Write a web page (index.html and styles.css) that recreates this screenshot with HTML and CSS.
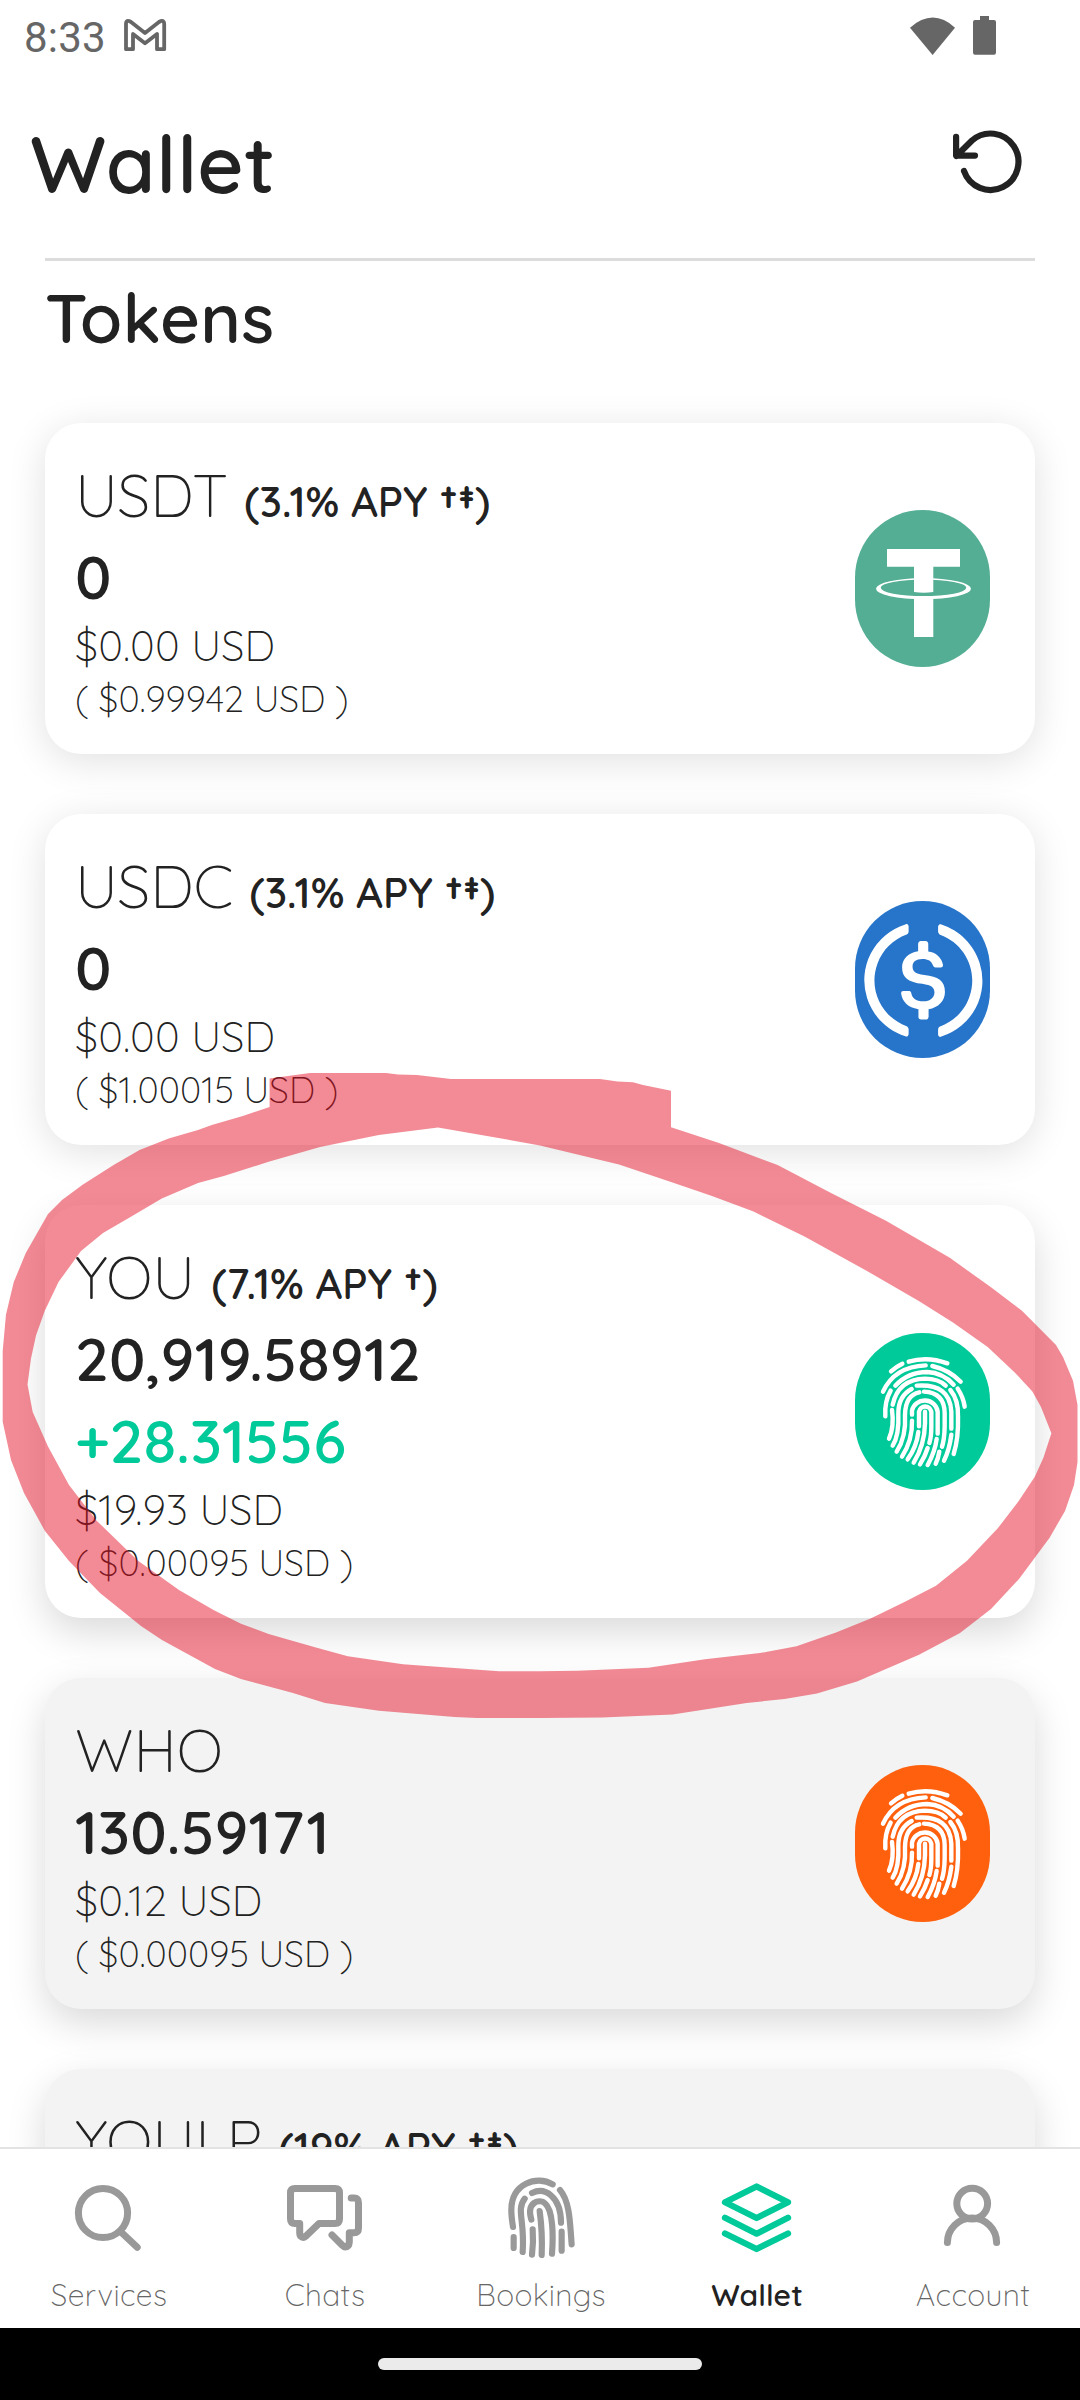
FILE: index.html
```html
<!DOCTYPE html>
<html lang="en">
<head>
<meta charset="utf-8">
<title>Wallet</title>
<link rel="stylesheet" href="styles.css">
</head>
<body>
<svg class="defs" aria-hidden="true">
  <symbol id="fingerprint" viewBox="45 69 405 471">
    <g fill="none" stroke="#fff" stroke-width="13.200" stroke-linecap="round">
      <path d="M206 155Q262 138 322 160M153 184Q170 169 187 161M129 245Q163 170 257 166M277 168Q328 180 362 215M166 227Q205 186 262 186Q308 188 341 224"/>
      <path d="M158 284Q175 208 255 206Q295 206 317 227M152 242Q133 275 136 319M353 236Q370 262 374 290"/>
      <path d="M156 300Q163 350 147 386M158 407Q178 375 175 310Q175 258 215 237M170 425Q199 380 195 315Q196 255 238 247"/>
      <path d="M252 245Q314 248 314 310V350Q313 390 306 410M230 227Q330 220 334 305V356M334 374Q328 420 312 452M331 240Q356 270 354 320Q356 385 341 432"/>
      <path d="M216 314V302A39 38 0 0 1 293 305V371M216 332Q218 390 186 440M237 349V305A19 20 0 0 1 274 305V350Q274 380 268 399"/>
      <path d="M255 305V340Q254 405 221 458M235 366Q230 410 203 448M263 414Q255 440 240 463M290 387Q285 425 263 465M298 425Q295 445 287 461"/>
    </g>
  </symbol>
</svg>

<div class="phone">
  <div class="status">
    <span class="time">8:33</span>
    <svg class="gmail" viewBox="0 0 50 42"><path d="M6 9V34.2H13V19L25 28.2L37 19V34.2H44.2V9Q44 4 39 7L25 18L11 7Q6 4 6 9Z" fill="none" stroke="#666" stroke-width="3.8" stroke-linejoin="round"/></svg>
    <svg class="wifi" viewBox="0 0 46 40"><path d="M0 10.7Q23 -9.5 45 10.7L22.6 38Z" fill="#666"/></svg>
    <svg class="battery" viewBox="0 0 24 40"><path d="M7 0H16V4H21Q23 4 23 6V36.500Q23 38.700 21 38.700H2Q0 38.700 0 36.500V6Q0 4 2 4H7Z" fill="#666"/></svg>
  </div>

  <header class="header">
    <h1>Wallet</h1>
    <svg class="refresh" viewBox="0 0 85 84" fill="none" stroke="#222" stroke-width="6.2" stroke-linecap="round" stroke-linejoin="round"><path d="M19 51A28 28.200 0 1 0 27 20.500L11.300 36M11.100 16.800V35.600H30"/></svg>
  </header>

  <main class="content">
    <h2>Tokens</h2>

    <section class="card">
      <div class="info">
        <div class="name">USDT <b>(3.1% APY †‡)</b></div>
        <div class="amount">0</div>
        <div class="value">$0.00 USD</div>
        <div class="rate">( $0.99942 USD )</div>
      </div>
      <svg class="token tether" viewBox="0 0 135 157" fill="#fff">
        <path d="M32 39H105V56.700H78.300V82Q69 83.500 59 82V56.700H32ZM59 88.500Q69 89.500 78.300 88.500V127H59Z"/>
        <path fill-rule="evenodd" d="M21 78.700A47.500 10.600 0 0 1 116 78.700A47.500 10.600 0 0 1 21 78.700ZM25.700 77.800A42.800 8.300 0 0 0 111.300 77.800A42.800 8.300 0 0 0 25.700 77.800Z"/>
      </svg>
    </section>

    <section class="card">
      <div class="info">
        <div class="name">USDC <b>(3.1% APY †‡)</b></div>
        <div class="amount">0</div>
        <div class="value">$0.00 USD</div>
        <div class="rate">( $1.00015 USD )</div>
      </div>
      <svg class="token usdc" viewBox="0 0 135 157" fill="#fff">
        <g transform="translate(69 79.500) scale(5.370) translate(-16.120 -16)">
          <path d="M20.022 18.124c0-2.124-1.280-2.852-3.840-3.156-1.828-.243-2.193-.728-2.193-1.578 0-.85.61-1.396 1.828-1.396 1.097 0 1.707.364 2.011 1.275a.458.458 0 00.427.303h.975a.416.416 0 00.427-.425v-.06a3.040 3.040 0 00-2.743-2.489V9.142c0-.243-.183-.425-.487-.486h-.915c-.243 0-.426.182-.487.486v1.396c-1.829.242-2.986 1.456-2.986 2.974 0 2.002 1.218 2.791 3.778 3.095 1.707.303 2.255.668 2.255 1.639 0 .97-.853 1.638-2.011 1.638-1.585 0-2.133-.667-2.316-1.578-.06-.242-.244-.364-.427-.364h-1.036a.416.416 0 00-.426.425v.06c.243 1.518 1.219 2.610 3.230 2.914v1.457c0 .242.183.425.487.485h.915c.243 0 .426-.182.487-.485V21.340c1.829-.303 3.047-1.578 3.047-3.216z"/>
          <path d="M12.892 24.497c-4.754-1.700-7.192-6.980-5.424-11.653.914-2.550 2.925-4.491 5.424-5.402.244-.121.365-.303.365-.607v-.85c0-.242-.121-.424-.365-.485-.061 0-.183 0-.244.06a10.895 10.895 0 00-7.130 13.717c1.096 3.400 3.717 6.010 7.130 7.102.244.121.488 0 .548-.243.061-.06.061-.122.061-.243v-.85c0-.182-.182-.424-.365-.546zm6.460-18.936c-.244-.122-.488 0-.548.242-.061.061-.061.122-.061.243v.85c0 .243.182.485.365.607 4.754 1.700 7.192 6.980 5.424 11.653-.914 2.550-2.925 4.491-5.424 5.402-.244.121-.365.303-.365.607v.85c0 .242.121.424.365.485.061 0 .183 0 .244-.06a10.895 10.895 0 007.130-13.717c-1.096-3.460-3.778-6.070-7.130-7.162z"/>
        </g>
      </svg>
    </section>

    <section class="card lift">
      <div class="info">
        <div class="name">YOU <b>(7.1% APY †)</b></div>
        <div class="amount">20,919.58912</div>
        <div class="amount gain">+28.31556</div>
        <div class="value">$19.93 USD</div>
        <div class="rate">( $0.00095 USD )</div>
      </div>
      <svg class="token you"><use href="#fingerprint"/></svg>
    </section>

    <section class="card lift muted">
      <div class="info">
        <div class="name">WHO</div>
        <div class="amount">130.59171</div>
        <div class="value">$0.12 USD</div>
        <div class="rate">( $0.00095 USD )</div>
      </div>
      <svg class="token who"><use href="#fingerprint"/></svg>
    </section>

    <section class="card lift muted">
      <div class="info">
        <div class="name">YOULP <b>(19% APY †‡)</b></div>
      </div>
    </section>
  </main>

  <nav class="tabs">
    <div class="tab">
      <svg viewBox="0 0 90 100"><circle cx="40" cy="43" r="24.600"/><path d="M58 62L74.200 77.300"/></svg>
      <span>Services</span>
    </div>
    <div class="tab">
      <svg viewBox="0 0 90 100"><path d="M16 18.500H56Q60.500 18.500 60.500 23V49Q60.500 53.400 56 53.400H40L27 66Q24 68.500 21.500 66Q20.700 65 20.700 63V53.400H16Q11.500 53.400 11.500 49V23Q11.500 18.500 16 18.500ZM72.200 28H75Q79.500 28 79.500 33V58Q79.500 62.700 75 62.700H70.300V72Q70 77 66 77Q65 77 63 75L53 65"/></svg>
      <span>Chats</span>
    </div>
    <div class="tab">
      <svg viewBox="0 0 90 100"><g transform="scale(.3333) translate(-15 -30)"><path d="M69 201Q64 170 64 150C64 70 140 45 188 73M71 231V264M104 116C78 150 105 180 98 276M126 99C165 80 213 110 213 188M124 179C108 125 150 115 165 130C190 150 190 230 186 281M128 208Q131 245 126 284M149 153Q158 220 155 285M215 215V272M210 90C240 125 240 190 245 253"/></g></svg>
      <span>Bookings</span>
    </div>
    <div class="tab active">
      <svg viewBox="0 0 90 100"><path d="M45.600 16.500L77 32.300L45.600 48L14 32.300ZM14 47.700L45.600 63.700L77 47.700M14 63.500L45.600 79L77 63.500"/></svg>
      <span>Wallet</span>
    </div>
    <div class="tab">
      <svg viewBox="0 0 90 100"><circle cx="45.200" cy="33.600" r="15.400"/><path d="M20.400 72.600A24.600 24.600 0 0 1 69.600 72.600"/></svg>
      <span>Account</span>
    </div>
  </nav>

  <div class="system"><div class="pill"></div></div>

  <svg class="marker" viewBox="0 0 1080 2400"><path fill-rule="evenodd" d="M269.600 1078.400L310 1073H386L398 1074.500L417 1075L451 1078.900H600L617.500 1081.500L633 1082.300L643 1085L671 1090.700V1127.300L719 1143L777.600 1165L831 1193L886 1220.800L949.800 1257.800L991 1287.300L1022 1310.800L1056 1345L1063 1357L1073 1380.700L1077.500 1405V1462L1074 1485L1065 1511L1049.600 1537.700L1019 1579L991 1609L960 1633L919 1654.700L857 1681.600L817 1693.400L784.500 1699L746.600 1703L672.600 1714.500L602 1717.400L540 1718H477L454.500 1717L379 1710.700L325 1703L293 1693L241 1679L215 1669L162 1640L141 1626L100 1593L69 1561L44.800 1530.700L24 1493L11 1460L2.700 1421.700V1351L6 1314.500L13.800 1282L25.800 1253L48 1214L62 1200L82.600 1184.800L113.600 1165L139.500 1150L168.700 1138.500L198 1130L211.800 1125L242.800 1116L269.600 1107Z
    M438 1127.400L378.800 1135L320 1147L268.600 1161.800L223.800 1176L198 1183L161.800 1198.500L132.600 1215.800L103 1233L81 1251L58.500 1282L44.800 1310.700L36 1335.500L31 1358.500L27.500 1384.500L32.700 1412L48 1446.500L69 1485L96.400 1520.400L137.700 1560.600L179 1590L213.500 1610L241 1623.700L268.600 1634L316.800 1647.800L347.800 1656.300L403 1664.300L437 1666.700L499 1671.300H540L578 1670.700L648.500 1667.700L705 1659.300L760 1653L796.500 1646.300L836 1632.400L870.600 1618.500L905 1601.700L936 1585.700L967 1560.800L998 1528L1018.700 1501L1034.800 1476.700L1043.400 1457.700L1051.400 1433.300L1041 1407L1032.400 1391.600L1015 1372.700L987.700 1347L953 1322.600L918.800 1301L867 1270.900L805 1236.800L753.500 1211.500L712 1196L671 1182L619 1164.400L540 1145.400Z"/></svg>
</div>
</body>
</html>
```
FILE: styles.css
```css
* { box-sizing: border-box; }
body { margin: 0; background: #fff; color: #222; font-family: Quicksand, Lato, sans-serif; }
svg { display: block; flex: none; }
.defs { position: absolute; width: 0; height: 0; }

.phone { position: relative; width: 1080px; height: 2400px; display: flex; flex-direction: column; overflow: hidden; }

.status { height: 72px; flex: none; display: flex; align-items: flex-start; padding: 15px 83px 0 24px; color: #666; }
.time { font: 400 42px/46px Roboto, sans-serif; letter-spacing: .2px; width: 96px; }
.gmail { width: 50px; height: 42px; }
.wifi { width: 46px; height: 40px; margin: 1.500px 0 0 auto; }
.battery { width: 24px; height: 40px; margin: 1px 0 0 17px; }

.header { height: 189px; flex: none; display: flex; justify-content: space-between; align-items: flex-start; padding: 0 50px 0 30px; }
h1 { margin: 41px 0 0; font-size: 80px; line-height: 100px; font-weight: 600; letter-spacing: .45px; }
.refresh { width: 85px; height: 84px; margin-top: 48px; }

.content { flex: 1; min-height: 0; overflow: hidden; margin-top: -3px; padding: 0 45px; display: flex; flex-direction: column; gap: 60px; }
h2 { flex: none; margin: 0; height: 105px; border-top: 3px solid #dcdcdc; padding-top: 13px; font-size: 69px; line-height: 86px; font-weight: 600; letter-spacing: .3px; }

.card { flex: none; display: flex; justify-content: space-between; align-items: center; padding: 31px 45px 31px 30px; border-radius: 36px; background: #fff; box-shadow: 0 7px 38px rgba(0, 0, 0, .12); }
.card.lift { box-shadow: 0 14px 38px rgba(0, 0, 0, .15); }
.card.muted { background: #f3f3f3; }
.name, .amount { height: 82px; line-height: 82px; font-size: 60px; white-space: nowrap; }
.name { font-weight: 340; letter-spacing: 0; }
.name b { font-size: 42px; font-weight: 600; letter-spacing: 0; }
.amount { font-weight: 600; letter-spacing: .1px; }
.gain { color: #00ca9a; }
.value { height: 56px; line-height: 56px; font-size: 42px; font-weight: 340; letter-spacing: .2px; }
.rate { height: 49px; line-height: 49px; font-size: 36px; font-weight: 340; letter-spacing: .1px; }

.token { width: 135px; height: 157px; border-radius: 67.500px; }
.tether { background: #54ae94; }
.usdc { background: #2775ca; }
.you { background: #00ca9a; }
.who { background: #ff600d; }

.tabs { height: 181px; flex: none; position: relative; display: flex; background: #fff; border-top: 2px solid #e3e3e3; padding-top: 21px; }
.tab { flex: 1; display: flex; flex-direction: column; align-items: center; gap: 5px; }
.tab svg { width: 90px; height: 100px; fill: none; stroke: #999; stroke-width: 7px; stroke-linecap: round; stroke-linejoin: round; }
.tab g { stroke-width: 18.500px; }
.tab span { padding-left: 2px; font-size: 30px; line-height: 40px; font-weight: 340; letter-spacing: .35px; color: #666; }
.tab.active svg { stroke: #00ca9a; stroke-width: 6.300px; }
.tab.active span { color: #222; font-weight: 600; letter-spacing: .1px; }

.system { height: 72px; flex: none; display: flex; justify-content: center; padding-top: 30px; background: #000; }
.pill { width: 324px; height: 12px; border-radius: 6px; background: #ebebeb; }

.marker { position: absolute; inset: 0; width: 1080px; height: 2400px; fill: rgba(228, 13, 34, .48); pointer-events: none; }
```
